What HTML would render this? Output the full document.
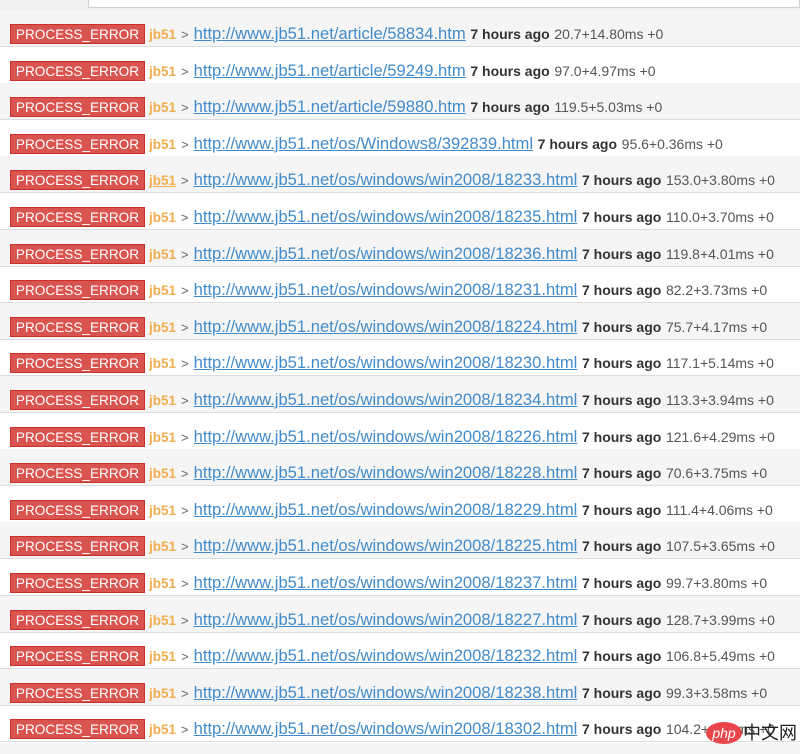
<!DOCTYPE html>
<html><head><meta charset="utf-8"><style>
body{margin:0;width:800px;height:754px;overflow:hidden;background:#fff;font-family:"Liberation Sans",Arial,sans-serif;position:relative}
.top{position:absolute;left:0;top:0;width:800px;height:10px;background:#f1f1f1;border-bottom:1px solid #c8c8c8}
.top .box{position:absolute;left:88px;top:-2px;width:710px;height:8px;background:#fff;border:1px solid #d0d0d0}
.r{position:absolute;left:0;width:800px;height:36px;border-bottom:1px solid #dcdcdc;white-space:nowrap}
.r.g{background:#f5f5f5}
.b{position:absolute;left:10px;top:14px;width:133px;height:18px;background:#d9534f;border:1px solid #c9302c;color:#fff;font-size:13.6px;line-height:19px;text-align:center}
.t{position:absolute;left:149px;top:13px;font-size:16.6px;line-height:22px}
.j{color:#f0ad4e;font-weight:bold;font-size:13.5px}
.gt{color:#666;font-size:13px;margin:0 5px 0 5px}
a{color:#428bca;text-decoration:underline}
.h{color:#333;font-weight:bold;font-size:14px}
.m{color:#555;font-size:14px}
</style></head><body>
<div class="top"><div class="box"></div></div>
<div class="r g" style="top:10px"><span class="b">PROCESS_ERROR</span><span class="t"><span class="j">jb51</span><span class="gt">&gt;</span><a>http://www.jb51.net/article/58834.htm</a> <span class="h">7 hours ago</span> <span class="m">20.7+14.80ms +0</span></span></div>
<div class="r" style="top:46.6px"><span class="b">PROCESS_ERROR</span><span class="t"><span class="j">jb51</span><span class="gt">&gt;</span><a>http://www.jb51.net/article/59249.htm</a> <span class="h">7 hours ago</span> <span class="m">97.0+4.97ms +0</span></span></div>
<div class="r g" style="top:83.2px"><span class="b">PROCESS_ERROR</span><span class="t"><span class="j">jb51</span><span class="gt">&gt;</span><a>http://www.jb51.net/article/59880.htm</a> <span class="h">7 hours ago</span> <span class="m">119.5+5.03ms +0</span></span></div>
<div class="r" style="top:119.8px"><span class="b">PROCESS_ERROR</span><span class="t"><span class="j">jb51</span><span class="gt">&gt;</span><a>http://www.jb51.net/os/Windows8/392839.html</a> <span class="h">7 hours ago</span> <span class="m">95.6+0.36ms +0</span></span></div>
<div class="r g" style="top:156.4px"><span class="b">PROCESS_ERROR</span><span class="t"><span class="j" style="text-decoration:underline">jb51</span><span class="gt">&gt;</span><a>http://www.jb51.net/os/windows/win2008/18233.html</a> <span class="h">7 hours ago</span> <span class="m">153.0+3.80ms +0</span></span></div>
<div class="r" style="top:193px"><span class="b">PROCESS_ERROR</span><span class="t"><span class="j">jb51</span><span class="gt">&gt;</span><a>http://www.jb51.net/os/windows/win2008/18235.html</a> <span class="h">7 hours ago</span> <span class="m">110.0+3.70ms +0</span></span></div>
<div class="r g" style="top:229.6px"><span class="b">PROCESS_ERROR</span><span class="t"><span class="j">jb51</span><span class="gt">&gt;</span><a>http://www.jb51.net/os/windows/win2008/18236.html</a> <span class="h">7 hours ago</span> <span class="m">119.8+4.01ms +0</span></span></div>
<div class="r" style="top:266.2px"><span class="b">PROCESS_ERROR</span><span class="t"><span class="j">jb51</span><span class="gt">&gt;</span><a>http://www.jb51.net/os/windows/win2008/18231.html</a> <span class="h">7 hours ago</span> <span class="m">82.2+3.73ms +0</span></span></div>
<div class="r g" style="top:302.8px"><span class="b">PROCESS_ERROR</span><span class="t"><span class="j">jb51</span><span class="gt">&gt;</span><a>http://www.jb51.net/os/windows/win2008/18224.html</a> <span class="h">7 hours ago</span> <span class="m">75.7+4.17ms +0</span></span></div>
<div class="r" style="top:339.4px"><span class="b">PROCESS_ERROR</span><span class="t"><span class="j">jb51</span><span class="gt">&gt;</span><a>http://www.jb51.net/os/windows/win2008/18230.html</a> <span class="h">7 hours ago</span> <span class="m">117.1+5.14ms +0</span></span></div>
<div class="r g" style="top:376px"><span class="b">PROCESS_ERROR</span><span class="t"><span class="j">jb51</span><span class="gt">&gt;</span><a>http://www.jb51.net/os/windows/win2008/18234.html</a> <span class="h">7 hours ago</span> <span class="m">113.3+3.94ms +0</span></span></div>
<div class="r" style="top:412.6px"><span class="b">PROCESS_ERROR</span><span class="t"><span class="j">jb51</span><span class="gt">&gt;</span><a>http://www.jb51.net/os/windows/win2008/18226.html</a> <span class="h">7 hours ago</span> <span class="m">121.6+4.29ms +0</span></span></div>
<div class="r g" style="top:449.2px"><span class="b">PROCESS_ERROR</span><span class="t"><span class="j">jb51</span><span class="gt">&gt;</span><a>http://www.jb51.net/os/windows/win2008/18228.html</a> <span class="h">7 hours ago</span> <span class="m">70.6+3.75ms +0</span></span></div>
<div class="r" style="top:485.8px"><span class="b">PROCESS_ERROR</span><span class="t"><span class="j">jb51</span><span class="gt">&gt;</span><a>http://www.jb51.net/os/windows/win2008/18229.html</a> <span class="h">7 hours ago</span> <span class="m">111.4+4.06ms +0</span></span></div>
<div class="r g" style="top:522.4px"><span class="b">PROCESS_ERROR</span><span class="t"><span class="j">jb51</span><span class="gt">&gt;</span><a>http://www.jb51.net/os/windows/win2008/18225.html</a> <span class="h">7 hours ago</span> <span class="m">107.5+3.65ms +0</span></span></div>
<div class="r" style="top:559px"><span class="b">PROCESS_ERROR</span><span class="t"><span class="j">jb51</span><span class="gt">&gt;</span><a>http://www.jb51.net/os/windows/win2008/18237.html</a> <span class="h">7 hours ago</span> <span class="m">99.7+3.80ms +0</span></span></div>
<div class="r g" style="top:595.6px"><span class="b">PROCESS_ERROR</span><span class="t"><span class="j">jb51</span><span class="gt">&gt;</span><a>http://www.jb51.net/os/windows/win2008/18227.html</a> <span class="h">7 hours ago</span> <span class="m">128.7+3.99ms +0</span></span></div>
<div class="r" style="top:632.2px"><span class="b">PROCESS_ERROR</span><span class="t"><span class="j">jb51</span><span class="gt">&gt;</span><a>http://www.jb51.net/os/windows/win2008/18232.html</a> <span class="h">7 hours ago</span> <span class="m">106.8+5.49ms +0</span></span></div>
<div class="r g" style="top:668.8px"><span class="b">PROCESS_ERROR</span><span class="t"><span class="j">jb51</span><span class="gt">&gt;</span><a>http://www.jb51.net/os/windows/win2008/18238.html</a> <span class="h">7 hours ago</span> <span class="m">99.3+3.58ms +0</span></span></div>
<div class="r" style="top:705.4px"><span class="b">PROCESS_ERROR</span><span class="t"><span class="j">jb51</span><span class="gt">&gt;</span><a>http://www.jb51.net/os/windows/win2008/18302.html</a> <span class="h">7 hours ago</span> <span class="m">104.2+4.27ms +0</span></span></div>
<div style="position:absolute;left:0;top:743px;width:800px;height:11px;background:#f5f5f5"></div>
<div style="position:absolute;left:706px;top:722px;width:36px;height:22px;border-radius:50%;background:#e8464a;color:#fff;font-size:14px;font-style:italic;line-height:22px;text-align:center">php</div>
<div style="position:absolute;left:743px;top:722px;font-size:18px;line-height:22px;color:#222;font-family:'Liberation Sans','Noto Sans CJK SC',sans-serif">中文网</div>
</body></html>
